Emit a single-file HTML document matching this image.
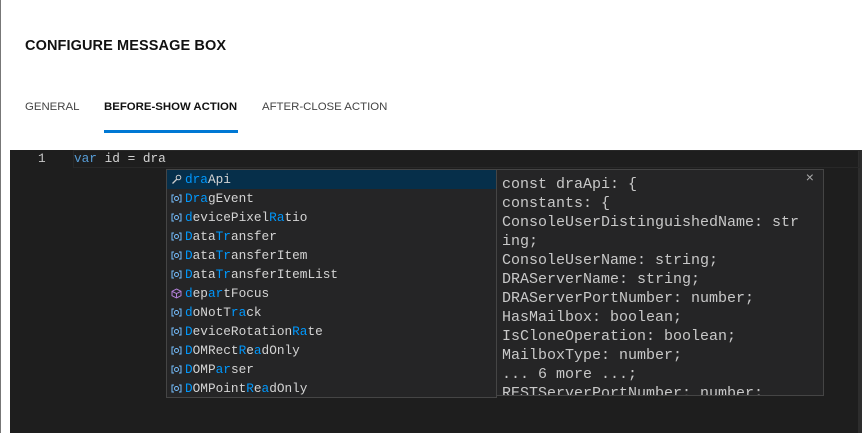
<!DOCTYPE html>
<html><head><style>
body{margin:0;width:862px;height:433px;background:#fff;position:relative;overflow:hidden;font-family:"Liberation Sans",sans-serif}
.lb{position:absolute;left:0;top:0;width:1px;height:433px;background:#777}
.title{position:absolute;left:25px;top:38px;font-size:14.5px;font-weight:bold;color:#111;letter-spacing:0.1px}
.tab{position:absolute;top:101px;font-size:11.4px;color:#444}
.ul{position:absolute;left:104px;top:130px;width:134px;height:3px;background:#0078d4}
.ed{position:absolute;left:10px;top:150px;width:848px;height:283px;background:#1e1e1e}
.rb{position:absolute;left:858px;top:150px;width:4px;height:283px;background:#2d2d2d}
.mono{font-family:"Liberation Mono",monospace}
.ln{position:absolute;left:38px;top:151px;font-size:12.75px;color:#c6c6c6}
.cur{position:absolute;left:73px;top:150px;width:785px;height:16px;border:1px solid #282828}
.code{position:absolute;left:74px;top:151px;font-size:12.75px;color:#d4d4d4}
.sug{position:absolute;left:166px;top:169px;width:329px;height:227px;background:#252526;border:1px solid #454545;overflow:hidden}
.row{height:19px;line-height:19px;font-size:12.75px;color:#d4d4d4;padding-left:18px;position:relative;white-space:pre}
.row.sel{background:#062f4a}
.row b{color:#0097fb;font-weight:normal}
.ic{position:absolute;left:4px;top:4px;width:11px;height:11px}
.det{position:absolute;left:496px;top:169px;width:328px;height:227px;background:#252526;border:1px solid #454545;overflow:hidden;padding-top:5px;box-sizing:border-box}
.det div{font-size:15px;line-height:19px;color:#c8c8c8;padding-left:5px;white-space:pre}
.x{position:absolute;right:9px;top:1px;color:#aaa;font-size:14px}
</style></head><body>
<svg width="0" height="0" style="position:absolute"><defs>
<symbol id="v" viewBox="0 0 11 11"><path d="M3 2H1v7h2M8 2h2v7H8" fill="none" stroke="#75beff" stroke-width="1"/><circle cx="5.5" cy="5.5" r="2" fill="none" stroke="#75beff" stroke-width="1"/></symbol>
</defs></svg>
<div class="lb"></div>
<div class="title">CONFIGURE MESSAGE BOX</div>
<div class="tab" style="left:25px">GENERAL</div>
<div class="tab" style="left:104px;font-weight:bold;color:#111">BEFORE-SHOW ACTION</div>
<div class="tab" style="left:262px">AFTER-CLOSE ACTION</div>
<div class="ul"></div>
<div class="ed"></div><div class="rb"></div>
<div class="cur"></div>
<div class="ln mono">1</div>
<div class="code mono"><span style="color:#569cd6">var</span> id = dra</div>
<div class="sug mono">
<div class="row sel"><svg class="ic" viewBox="0 0 11 11"><circle cx="7.5" cy="3.5" r="2.3" fill="none" stroke="#ccc"/><path d="M6 5L1.5 9.5" stroke="#ccc" stroke-width="1.3"/></svg><b>dra</b>Api</div>
<div class="row"><svg class="ic"><use href="#v"/></svg><b>Dra</b>gEvent</div>
<div class="row"><svg class="ic"><use href="#v"/></svg><b>d</b>evicePixel<b>Ra</b>tio</div>
<div class="row"><svg class="ic"><use href="#v"/></svg><b>D</b>ata<b>Tr</b>ansfer</div>
<div class="row"><svg class="ic"><use href="#v"/></svg><b>D</b>ata<b>Tr</b>ansferItem</div>
<div class="row"><svg class="ic"><use href="#v"/></svg><b>D</b>ata<b>Tr</b>ansferItemList</div>
<div class="row"><svg class="ic" viewBox="0 0 11 11"><path d="M5.5 1L10 3.3v4.4L5.5 10 1 7.7V3.3z M1 3.3l4.5 2.3L10 3.3M5.5 5.6V10" fill="none" stroke="#b180d7"/></svg><b>d</b>ep<b>ar</b>tFocus</div>
<div class="row"><svg class="ic"><use href="#v"/></svg><b>d</b>oNotT<b>ra</b>ck</div>
<div class="row"><svg class="ic"><use href="#v"/></svg><b>D</b>eviceRotation<b>Ra</b>te</div>
<div class="row"><svg class="ic"><use href="#v"/></svg><b>D</b>OMRect<b>R</b>e<b>a</b>dOnly</div>
<div class="row"><svg class="ic"><use href="#v"/></svg><b>D</b>OMP<b>ar</b>ser</div>
<div class="row"><svg class="ic"><use href="#v"/></svg><b>D</b>OMPoint<b>R</b>e<b>a</b>dOnly</div>
</div>
<div class="det mono">
<span class="x">×</span>
<div>const draApi: {</div>
<div>constants: {</div>
<div>ConsoleUserDistinguishedName: str</div>
<div>ing;</div>
<div>ConsoleUserName: string;</div>
<div>DRAServerName: string;</div>
<div>DRAServerPortNumber: number;</div>
<div>HasMailbox: boolean;</div>
<div>IsCloneOperation: boolean;</div>
<div>MailboxType: number;</div>
<div>... 6 more ...;</div>
<div>RESTServerPortNumber: number;</div>
</div>
</body></html>
